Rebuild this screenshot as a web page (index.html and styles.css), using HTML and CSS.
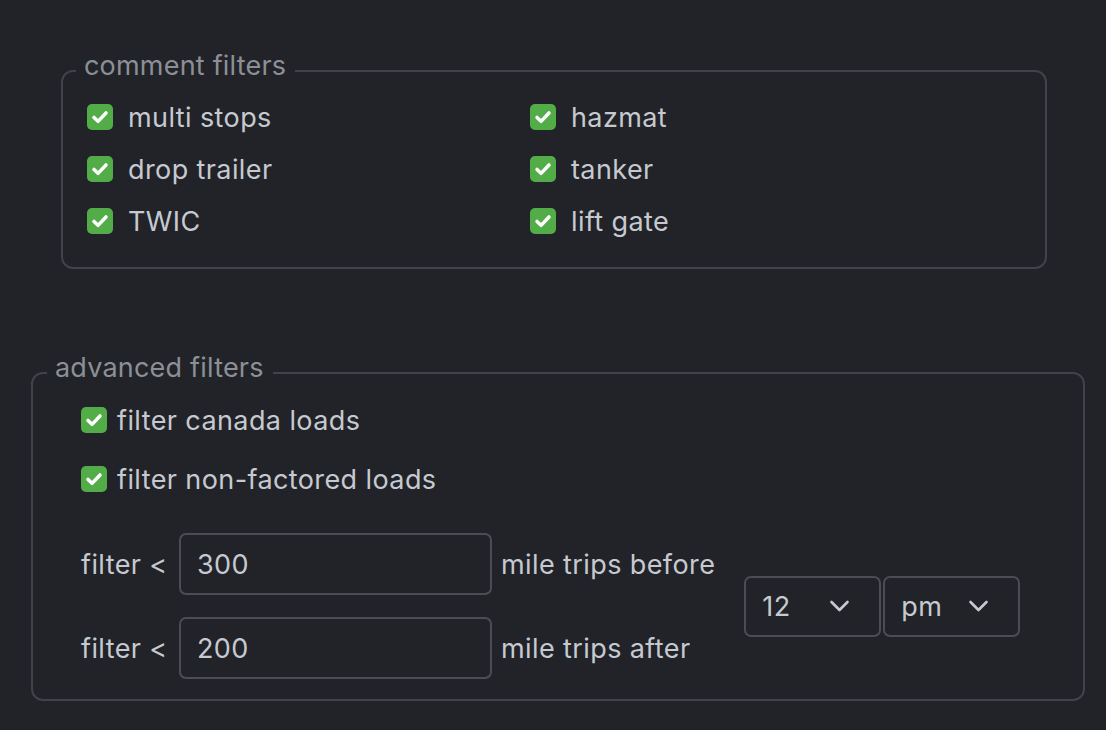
FILE: index.html
```html
<!DOCTYPE html>
<html>
<head>
<meta charset="utf-8">
<link rel="stylesheet" href="styles.css">
</head>
<body>
<div class="page">
  <fieldset class="group group-comment">
    <legend>comment filters</legend>
    <div class="grid">
      <label class="check"><span class="box"><svg viewBox="0 0 16 16"><path d="M4 8.3l2.7 2.6 5.3-5.6" /></svg></span><span>multi stops</span></label>
      <label class="check"><span class="box"><svg viewBox="0 0 16 16"><path d="M4 8.3l2.7 2.6 5.3-5.6" /></svg></span><span>hazmat</span></label>
      <label class="check"><span class="box"><svg viewBox="0 0 16 16"><path d="M4 8.3l2.7 2.6 5.3-5.6" /></svg></span><span>drop trailer</span></label>
      <label class="check"><span class="box"><svg viewBox="0 0 16 16"><path d="M4 8.3l2.7 2.6 5.3-5.6" /></svg></span><span>tanker</span></label>
      <label class="check"><span class="box"><svg viewBox="0 0 16 16"><path d="M4 8.3l2.7 2.6 5.3-5.6" /></svg></span><span>TWIC</span></label>
      <label class="check"><span class="box"><svg viewBox="0 0 16 16"><path d="M4 8.3l2.7 2.6 5.3-5.6" /></svg></span><span>lift gate</span></label>
    </div>
  </fieldset>

  <fieldset class="group group-advanced">
    <legend>advanced filters</legend>
    <label class="check tight row-check"><span class="box"><svg viewBox="0 0 16 16"><path d="M4 8.3l2.7 2.6 5.3-5.6" /></svg></span><span>filter canada loads</span></label>
    <label class="check tight row-check second"><span class="box"><svg viewBox="0 0 16 16"><path d="M4 8.3l2.7 2.6 5.3-5.6" /></svg></span><span>filter non-factored loads</span></label>
    <div class="trips">
      <div class="trip-grid">
        <span class="lbl">filter &lt;</span>
        <div class="input">300</div>
        <span class="lbl">mile trips before</span>
        <span class="lbl">filter &lt;</span>
        <div class="input">200</div>
        <span class="lbl">mile trips after</span>
      </div>
      <div class="selects">
        <div class="select"><span>12</span><svg viewBox="0 0 20 12"><path d="M2 2l8 8 8-8" /></svg></div>
        <div class="select"><span>pm</span><svg viewBox="0 0 20 12"><path d="M2 2l8 8 8-8" /></svg></div>
      </div>
    </div>
  </fieldset>
</div>
</body>
</html>
```

FILE: styles.css
```css
html, body {
  margin: 0;
  padding: 0;
  background: #212328;
}
body {
  font-family: Inter, "Noto Sans", "Liberation Sans", sans-serif;
  color: #c6cad0;
  font-size: 27px;
  letter-spacing: 0.4px;
}
.page {
  padding-top: 51px;
  width: 1106px;
  height: 730px;
  box-sizing: border-box;
}
.group {
  border: 2px solid #404349;
  border-radius: 12px;
  margin: 0;
  min-width: 0;
}
.group legend {
  font-size: 27px;
  line-height: 30px;
  letter-spacing: 0.2px;
  color: #8c9096;
  padding: 0 9px 10px 8px;
}
.group-comment {
  margin-left: 61px;
  width: 986px;
  box-sizing: border-box;
  padding: 0 24px 20px 24px;
  margin-bottom: 84px;
}
.group-comment legend {
  margin-left: -11px;
}
.grid {
  display: grid;
  grid-template-columns: 443px 443px;
  grid-auto-rows: 52px;
}
.check {
  display: flex;
  align-items: center;
  gap: 15px;
}
.check.tight {
  gap: 10px;
}
.box {
  width: 26px;
  height: 26px;
  border-radius: 5px;
  background: #52ad48;
  display: flex;
  align-items: center;
  justify-content: center;
  flex: none;
}
.box svg {
  width: 24px;
  height: 24px;
  fill: none;
  stroke: #fff;
  stroke-width: 2.3;
  stroke-linecap: round;
  stroke-linejoin: round;
}
.group-advanced {
  margin-left: 31px;
  width: 1054px;
  box-sizing: border-box;
  padding: 7px 30px 20px 48px;
}
.group-advanced legend {
  margin-left: -34px;
}
.row-check {
  height: 40px;
}
.row-check.second {
  margin-top: 19px;
}
.trips {
  margin-top: 34px;
  display: flex;
  align-items: center;
  gap: 29px;
}
.trip-grid {
  display: grid;
  grid-template-columns: 87px 313px auto;
  column-gap: 11px;
  row-gap: 22px;
  align-items: center;
}
.trip-grid .input + .lbl {
  margin-left: -2px;
}
.lbl {
  white-space: nowrap;
}
.input {
  height: 62px;
  box-sizing: border-box;
  border: 2px solid #4a4d53;
  border-radius: 7px;
  padding: 0 16px;
  display: flex;
  align-items: center;
}
.selects {
  display: flex;
  gap: 2px;
}
.select {
  width: 137px;
  height: 61px;
  box-sizing: border-box;
  border: 2px solid #4a4d53;
  border-radius: 7px;
  padding: 0 29px 0 16px;
  display: flex;
  align-items: center;
  justify-content: space-between;
}
.select svg {
  width: 21px;
  height: 12px;
  fill: none;
  stroke: #c6cad0;
  stroke-width: 2.6;
  stroke-linecap: round;
  stroke-linejoin: round;
}
```
